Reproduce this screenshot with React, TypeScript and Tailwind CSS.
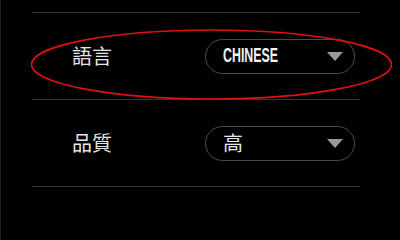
import React from 'react';

// Settings rows shown in the panel
const rows = [
    { label: '語言', value: 'CHINESE', latin: true },
    { label: '品質', value: '高', latin: false },
];

function Caret() {
    return (
        <svg width="16" height="9" viewBox="0 0 16 9" className="shrink-0">
            <polygon points="0,0 16,0 8,9" fill="#9a9a9a" />
        </svg>
    );
}

function SettingRow({ label, value, latin }: { label: string; value: string; latin: boolean }) {
    return (
        <div className="flex items-center justify-between h-[86px] pl-10 pr-[5px]">
            <span className="text-[20px] leading-none text-[#e6e6e6] font-['Noto_Sans_CJK_TC',sans-serif]">{label}</span>
            <div className="flex items-center justify-between w-[150px] h-[35px] rounded-full border-[1.5px] border-[#4a4a4a] pl-[17px] pr-[11px]">
                {latin ? (
                    <span className="block w-[56px] overflow-visible">
                        <span className="inline-block origin-left scale-x-[0.59] text-[21px] leading-none font-bold text-[#f2f2f2] font-['Liberation_Sans',sans-serif] whitespace-nowrap">
                            {value}
                        </span>
                    </span>
                ) : (
                    <span className="text-[20px] leading-none text-[#e6e6e6] font-['Noto_Sans_CJK_TC',sans-serif]">{value}</span>
                )}
                <Caret />
            </div>
        </div>
    );
}

export default function App() {
    return (
        <div className="relative w-[400px] h-[240px] bg-black overflow-hidden border-l border-[#1e1e1e]">
            <div className="ml-[31px] w-[328px] pt-3">
                <div className="h-px bg-[#333]" />
                {rows.map((row) => (
                    <React.Fragment key={row.label}>
                        <SettingRow {...row} />
                        <div className="h-px bg-[#333]" />
                    </React.Fragment>
                ))}
            </div>
            {/* red annotation ring */}
            <svg className="absolute left-0 top-0 pointer-events-none" width="400" height="240">
                <ellipse cx="210.5" cy="64.5" rx="180" ry="34.5" fill="none" stroke="#e01010" strokeWidth="1.6" />
            </svg>
        </div>
    );
}
